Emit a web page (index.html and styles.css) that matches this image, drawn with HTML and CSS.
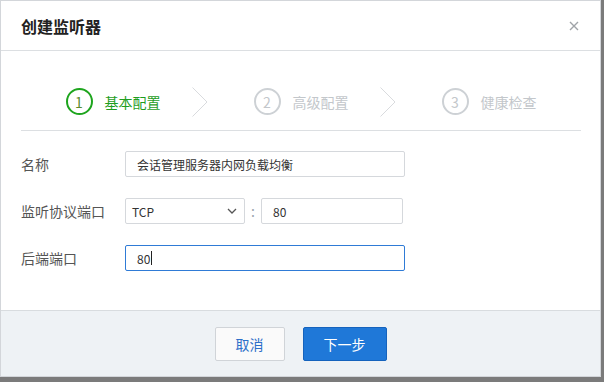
FILE: index.html
```html
<!DOCTYPE html>
<html lang="zh-CN">
<head>
    <meta charset="UTF-8">
    <title>创建监听器</title>
    <link rel="stylesheet" href="styles.css">
</head>
<body>
    <div class="dialog">
        <div class="header">
            <h1>创建监听器</h1>
            <svg class="close" width="10" height="10" viewBox="0 0 10 10">
                <path d="M1 1L9 9M9 1L1 9" stroke="#a0a4a8" stroke-width="1.4" fill="none"/>
            </svg>
        </div>

        <div class="body">
            <div class="steps">
                <div class="step active">
                    <span class="num">1</span>
                    <span class="name">基本配置</span>
                </div>
                <svg class="arrow" width="16" height="30" viewBox="0 0 16 30">
                    <polyline points="0.5,0.5 15,15 0.5,29.5" stroke="#d9dbde" fill="none"/>
                </svg>
                <div class="step">
                    <span class="num">2</span>
                    <span class="name">高级配置</span>
                </div>
                <svg class="arrow" width="16" height="30" viewBox="0 0 16 30">
                    <polyline points="0.5,0.5 15,15 0.5,29.5" stroke="#d9dbde" fill="none"/>
                </svg>
                <div class="step">
                    <span class="num">3</span>
                    <span class="name">健康检查</span>
                </div>
            </div>

            <div class="form">
                <div class="row">
                    <label>名称</label>
                    <div class="field wide">会话管理服务器内网负载均衡</div>
                </div>
                <div class="row">
                    <label>监听协议端口</label>
                    <div class="field select">
                        <span>TCP</span>
                        <svg width="10" height="6" viewBox="0 0 10 6">
                            <polyline points="1,1 5,5 9,1" stroke="#555" stroke-width="1.3" fill="none"/>
                        </svg>
                    </div>
                    <span class="colon">:</span>
                    <div class="field port">80</div>
                </div>
                <div class="row">
                    <label>后端端口</label>
                    <div class="field wide focus">80<span class="caret"></span></div>
                </div>
            </div>
        </div>

        <div class="footer">
            <button class="btn">取消</button>
            <button class="btn primary">下一步</button>
        </div>
    </div>
</body>
</html>
```

FILE: styles.css
```css
* {
    margin: 0;
    padding: 0;
    box-sizing: border-box;
}

body {
    background: #7b7b7b;
    font-family: "Noto Sans CJK SC", "Noto Sans", sans-serif;
    color: #333;
}

.dialog {
    width: 601px;
    height: 377px;
    background: #fff;
    border: 1px solid #d3d6da;
    display: flex;
    flex-direction: column;
}

.header {
    height: 50px;
    border-bottom: 1px solid #dcdfe2;
    display: flex;
    align-items: center;
    justify-content: space-between;
    padding: 0 20px 0 20px;
}

.header h1 {
    font-size: 16px;
    font-weight: bold;
    color: #222;
}

.close {
    margin-right: 1px;
}

.body {
    flex: 1;
    padding: 0 19px 0 20px;
}

.steps {
    height: 80px;
    border-bottom: 1px solid #dcdfe2;
    display: flex;
    align-items: flex-start;
    justify-content: center;
    padding-top: 37px;
}

.step {
    display: flex;
    align-items: center;
    color: #c3c7cb;
    font-size: 14px;
}

.step .num {
    width: 27px;
    height: 27px;
    border: 2px solid #cdd1d5;
    border-radius: 50%;
    display: flex;
    align-items: center;
    justify-content: center;
    margin-right: 12px;
    font-size: 14px;
}

.step.active {
    color: #1f9e1f;
}

.step.active .num {
    border-color: #1ea51e;
    color: #5a8a2a;
}

.arrow {
    margin: -1px 46px 0 31px;
}

.form {
    padding-top: 20px;
}

.row {
    display: flex;
    align-items: center;
    height: 26px;
    margin-bottom: 21px;
}

.row label {
    width: 104px;
    font-size: 14px;
    color: #555;
}

.field {
    height: 26px;
    border: 1px solid #d5d8dc;
    border-radius: 2px;
    font-size: 12px;
    color: #333;
    padding: 0 11px;
    display: flex;
    align-items: center;
}

.field.wide {
    width: 280px;
}

.field.select {
    width: 120px;
    justify-content: space-between;
    padding: 0 7px 0 6px;
}

.colon {
    width: 16px;
    text-align: center;
    color: #9aa4ae;
    font-size: 14px;
}

.field.port {
    width: 142px;
    padding-left: 11px;
}

.field.focus {
    border-color: #2f7bd6;
}

.caret {
    width: 1px;
    height: 14px;
    background: #222;
    margin-left: 1px;
}

.footer {
    height: 66px;
    background: #eef2f5;
    border-top: 1px solid #d8dcdf;
    display: flex;
    align-items: center;
    justify-content: center;
    gap: 18px;
}

.btn {
    height: 34px;
    font-family: inherit;
    font-size: 14px;
    border: 1px solid #d0d4d8;
    border-radius: 2px;
    background: #fafafa;
    color: #2d6fc9;
    width: 70px;
}

.btn.primary {
    width: 84px;
    background: #1f78d8;
    border-color: #1563bd;
    color: #fff;
}
```
